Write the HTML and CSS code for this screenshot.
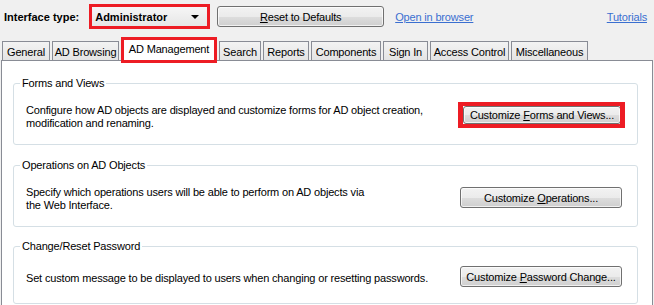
FILE: index.html
```html
<!DOCTYPE html>
<html>
<head>
<meta charset="utf-8">
<link rel="stylesheet" href="styles.css">
</head>
<body>
<div class="top">
  <span class="label">Interface type:</span>
  <div class="combo"><span class="combo-text">Administrator</span><span class="arrow"></span></div>
  <button class="btn reset"><span><u>R</u>eset to Defaults</span></button>
  <a class="link open">Open in browser</a>
  <a class="link tutorials">Tutorials</a>
</div>
<div class="tabs">
  <div class="tab t-general">General</div>
  <div class="tab t-browsing">AD Browsing</div>
  <div class="tab selected t-management">AD Management</div>
  <div class="tab t-search">Search</div>
  <div class="tab t-reports">Reports</div>
  <div class="tab t-components">Components</div>
  <div class="tab t-signin">Sign In</div>
  <div class="tab t-access">Access Control</div>
  <div class="tab t-misc">Miscellaneous</div>
</div>
<div class="panel">
  <fieldset class="group g1">
    <legend>Forms and Views</legend>
    <div class="group-body b1">
      <p class="desc">Configure how AD objects are displayed and customize forms for AD object creation,<br>modification and renaming.</p>
      <div class="highlight"><button class="btn inner"><span>Customize <u>F</u>orms and Views...</span></button></div>
    </div>
  </fieldset>
  <fieldset class="group g2">
    <legend>Operations on AD Objects</legend>
    <div class="group-body b2">
      <p class="desc">Specify which operations users will be able to perform on AD objects via<br>the Web Interface.</p>
      <button class="btn action"><span>Customize <u>O</u>perations...</span></button>
    </div>
  </fieldset>
  <fieldset class="group g3">
    <legend>Change/Reset Password</legend>
    <div class="group-body b3">
      <p class="desc">Set custom message to be displayed to users when changing or resetting passwords.</p>
      <button class="btn action"><span>Customize <u>P</u>assword Change...</span></button>
    </div>
  </fieldset>
</div>
</body>
</html>
```
FILE: styles.css
```css
* { box-sizing: border-box; }
html, body { margin: 0; padding: 0; }
body {
  width: 654px;
  height: 305px;
  overflow: hidden;
  background: #f0f0f0;
  font-family: "Liberation Sans", Arial, sans-serif;
  font-size: 11px;
  letter-spacing: -0.17px;
  color: #000;
  display: flex;
  flex-direction: column;
}
.top {
  display: flex;
  align-items: center;
  height: 25px;
  margin-top: 4px;
  padding-left: 4px;
  flex: none;
}
.label { font-weight: bold; letter-spacing: 0; }
.combo {
  margin-left: 10px;
  width: 121px;
  height: 25px;
  border: 3px solid #ed1c24;
  background: linear-gradient(#f6f6f6, #e6e6e6);
  display: flex;
  align-items: center;
  padding-left: 3px;
  padding-right: 8px;
}
.combo-text { font-weight: bold; flex: 1; letter-spacing: 0; }
.arrow {
  width: 0; height: 0;
  border-left: 4px solid transparent;
  border-right: 4px solid transparent;
  border-top: 4px solid #000;
}
.btn {
  font-family: "Liberation Sans", Arial, sans-serif;
  font-size: 11px;
  letter-spacing: -0.17px;
  color: #000;
  border: 1px solid #707070;
  border-radius: 3px;
  background: linear-gradient(#f2f2f2 0%, #ebebeb 50%, #dddddd 51%, #cfcfcf 100%);
  box-shadow: inset 0 0 0 1px rgba(255,255,255,0.7);
  padding: 0;
  display: flex;
  align-items: center;
  justify-content: center;
}
.reset {
  margin-left: 7px;
  width: 167px;
  height: 21px;
}
.link {
  color: #3a6fd0;
  text-decoration: underline;
}
.open { margin-left: 11px; }
.tutorials { margin-left: auto; margin-right: 7px; }
.tabs {
  display: flex;
  align-items: flex-end;
  margin-top: 4px;
  padding-left: 2px;
  height: 30px;
  position: relative;
  z-index: 2;
  margin-bottom: -3px;
  flex: none;
}
.tab {
  height: 19px;
  border: 1px solid #898c95;
  border-bottom: none;
  background: linear-gradient(#f3f3f3, #e4e4e4);
  padding: 1px 0 0;
  margin-right: 2px;
  display: flex;
  align-items: center;
  justify-content: center;
  margin-bottom: 3px;
  white-space: nowrap;
}
.tab.selected {
  height: 26px;
  margin-bottom: 0;
  border: 3px solid #ed1c24;
  background: #fff;
  padding: 0 0 3px;
}
.t-general { width: 48px; }
.t-browsing { width: 67px; }
.t-management { width: 96px; }
.t-search { width: 42px; }
.t-reports { width: 46px; }
.t-components { width: 70px; }
.t-signin { width: 45px; }
.t-access { width: 79px; }
.t-misc { width: 77px; }
.panel {
  margin: 0 1px 0 1px;
  flex: 1;
  background: #fff;
  border: 1px solid #898c95;
  border-bottom: none;
  padding: 16px 14px 0 11px;
}
.group {
  margin: 0;
  border: 1px solid #d5dfe5;
  border-radius: 3px;
  padding: 0 15px 0 12px;
}
.group legend {
  padding: 0 2px;
  margin-left: -6px;
  line-height: 13px;
}
.g2 { margin-top: 14px; }
.g3 { margin-top: 13px; }
.group-body {
  display: flex;
  align-items: center;
  justify-content: space-between;
}
.b1 { height: 54px; }
.b2 { height: 54px; }
.b3 { height: 50px; }
.desc {
  margin: 0;
  line-height: 13px;
}
.highlight {
  border: 4px solid #ed1c24;
  border-left-width: 5px;
  border-right-width: 5px;
  width: 167px;
  height: 26px;
  margin-right: -3px;
  margin-bottom: 5px;
  overflow: hidden;
}
.inner {
  width: 158px;
  height: 18px;
}
.action {
  width: 162px;
  height: 21px;
  margin-bottom: 3px;
}
```
